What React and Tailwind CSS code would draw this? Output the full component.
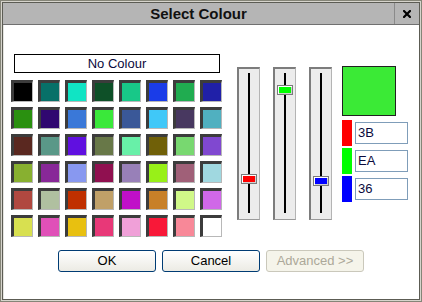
import React from "react";

const SWATCHES = [
  "bg-[#000000]", "bg-[#077068]", "bg-[#10E4C4]", "bg-[#0E5028]", "bg-[#18C888]", "bg-[#1A3CE8]", "bg-[#20AC50]", "bg-[#2020A8]",
  "bg-[#2A9010]", "bg-[#300870]", "bg-[#3A78D8]", "bg-[#3AE83A]", "bg-[#3A5898]", "bg-[#40C8F8]", "bg-[#483860]", "bg-[#50B0C0]",
  "bg-[#5A2820]", "bg-[#5A9888]", "bg-[#6010E0]", "bg-[#687848]", "bg-[#68F0A8]", "bg-[#706008]", "bg-[#78D870]", "bg-[#8048D0]",
  "bg-[#88B030]", "bg-[#882898]", "bg-[#8898F0]", "bg-[#901050]", "bg-[#9880B8]", "bg-[#98F018]", "bg-[#A06078]", "bg-[#A0D8E0]",
  "bg-[#B04840]", "bg-[#B0C0A0]", "bg-[#C03000]", "bg-[#C0A068]", "bg-[#C010C8]", "bg-[#C88028]", "bg-[#D0F888]", "bg-[#D068E8]",
  "bg-[#D8E050]", "bg-[#E050B8]", "bg-[#E8C010]", "bg-[#E83878]", "bg-[#F0A0D8]", "bg-[#F81838]", "bg-[#F88898]", "bg-[#FFFFFF]",
];

function Track({ thumbTop, thumbColor }) {
  return (
    <div className="relative w-[23px] h-[153px] bg-[#ececec] border-t-2 border-l-2 border-t-[#7c7c7c] border-l-[#7c7c7c] border-r border-b border-r-[#b4b4b4] border-b-[#9a9a9a] flex flex-col items-center pt-[4px] pb-[6px]">
      <div className="flex-1 w-[2px] bg-black" />
      <div
        className={`absolute left-1/2 -translate-x-1/2 w-[16px] h-[10px] border border-[#7a7a7a] shadow-[inset_1px_1px_0_#ffffff,inset_-1px_-1px_0_#d0d0d0] ${thumbTop} ${thumbColor}`}
      />
    </div>
  );
}

function ValueRow({ bar, value }) {
  return (
    <div className="flex items-start gap-[3px] h-[26px]">
      <div className={`w-[10px] h-[26px] ${bar}`} />
      <div className="mt-[2px] w-[53px] h-[22px] border border-[#7f9db9] bg-white flex items-center pl-[2px] text-[13px] text-[#0a0a3c]">
        {value}
      </div>
    </div>
  );
}

export default function App() {
  return (
    <div
      className="w-[422px] h-[302px] bg-[#858578] p-px"
      style={{ fontFamily: '"Liberation Sans", Arial, sans-serif' }}
    >
      <div className="w-full h-full bg-[#d6d4cc] p-px">
        <div className="w-full h-full bg-[#5c5c54] p-px">
          <div className="w-full h-full bg-white flex flex-col">
            {/* Title bar */}
            <div className="h-[22px] bg-[#b5b5b5] border-b border-[#707070] flex">
              <div className="flex-1 flex items-center justify-center text-[15px] font-bold text-[#111111] leading-none">
                Select Colour
              </div>
              <div className="w-[25px] border-l border-[#8a8a8a] flex items-center justify-center">
                <svg width="8" height="8" viewBox="0 0 8 8">
                  <path d="M1 1 L7 7 M7 1 L1 7" stroke="#000" strokeWidth="2.2" strokeLinecap="square" />
                </svg>
              </div>
            </div>

            {/* Body */}
            <div className="flex-1 flex flex-col border-l border-[#e4e4e0]">
              <div className="flex items-start pl-[7px]">
                {/* Left column */}
                <div className="w-[211px] mt-[29px] flex flex-col">
                  <div className="ml-[3px] w-[206px] h-[19px] border border-black flex items-center justify-center text-[13px] text-[#0a0a3c]">
                    No Colour
                  </div>
                  <div className="mt-[7px] grid grid-cols-[repeat(8,22px)] auto-rows-[22px] gap-[5px]">
                    {SWATCHES.map((c, i) => (
                      <div
                        key={i}
                        className={`w-[22px] h-[22px] border-t-[3px] border-l-[3px] border-t-[#3c3c3c] border-l-[#3c3c3c] border-r border-b border-r-[#b8b8b8] border-b-[#b8b8b8] ${c}`}
                      />
                    ))}
                  </div>
                </div>

                {/* Sliders */}
                <div className="ml-[15px] mt-[42px] flex gap-[13px]">
                  <Track thumbTop="top-[105px]" thumbColor="bg-[#ff0000]" />
                  <Track thumbTop="top-[16px]" thumbColor="bg-[#00ff00]" />
                  <Track thumbTop="top-[107px]" thumbColor="bg-[#0000ff]" />
                </div>

                {/* Preview and values */}
                <div className="ml-[10px] mt-[41px] flex flex-col">
                  <div className="w-[54px] h-[50px] border border-[#202020] bg-[#3BEA36]" />
                  <div className="mt-[4px] flex flex-col gap-[2px]">
                    <ValueRow bar="bg-[#ff0000]" value="3B" />
                    <ValueRow bar="bg-[#00ff00]" value="EA" />
                    <ValueRow bar="bg-[#0000ff]" value="36" />
                  </div>
                </div>
              </div>

              {/* Buttons */}
              <div className="mt-[13px] pl-[54px] flex gap-[6px]">
                <button className="w-[98px] h-[22px] rounded-[3px] border border-[#003c74] bg-gradient-to-b from-white to-[#ecebe4] text-[13px] text-black flex items-center justify-center">
                  OK
                </button>
                <button className="w-[98px] h-[22px] rounded-[3px] border border-[#003c74] bg-gradient-to-b from-white to-[#ecebe4] text-[13px] text-black flex items-center justify-center">
                  Cancel
                </button>
                <button className="w-[98px] h-[22px] rounded-[3px] border border-[#cac8bb] bg-[#f5f4ea] text-[13px] text-[#aca899] flex items-center justify-center">
                  Advanced &gt;&gt;
                </button>
              </div>
            </div>
          </div>
        </div>
      </div>
    </div>
  );
}
